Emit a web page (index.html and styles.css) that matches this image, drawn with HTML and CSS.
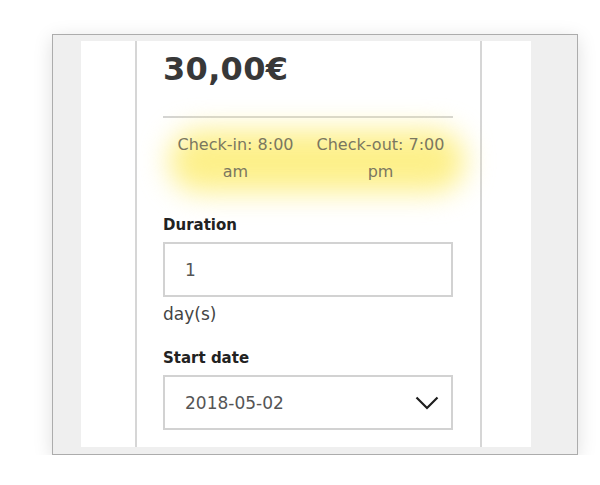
FILE: index.html
```html
<!DOCTYPE html>
<html>
<head>
<meta charset="utf-8">
<link rel="stylesheet" href="styles.css">
</head>
<body>
<div class="frame">
  <div class="page">
    <div class="gutter"></div>
    <div class="column">
      <div class="price">30,00€</div>
      <div class="rule"></div>
      <div class="hours">
        <div class="hour">Check-in: 8:00 am</div>
        <div class="hour">Check-out: 7:00 pm</div>
      </div>
      <div class="field">
        <div class="label">Duration</div>
        <div class="input">1</div>
        <div class="unit">day(s)</div>
      </div>
      <div class="field">
        <div class="label">Start date</div>
        <div class="input select">
          <span>2018-05-02</span>
          <svg class="chev" width="24" height="14" viewBox="0 0 24 14"><path d="M1.5 1.5 L12 12 L22.5 1.5" fill="none" stroke="#1e1e1e" stroke-width="2.2"/></svg>
        </div>
      </div>
    </div>
  </div>
</div>
</body>
</html>
```
FILE: styles.css
```css
html, body {
  margin: 0;
  padding: 0;
  background: #ffffff;
}
body {
  font-family: "DejaVu Sans", "Noto Sans", sans-serif;
  color: #333;
}
.frame {
  margin: 34px 0 0 52px;
  border: 1px solid #acacac;
  background: #efefef;
  box-shadow: 0 4px 18px rgba(0,0,0,0.13);
  padding: 6px 0 0 28px;
  box-sizing: content-box;
  width: 496px;
  height: 413px;
  overflow: hidden;
}
.page {
  width: 450px;
  height: 406px;
  background: #fff;
  display: flex;
  overflow: hidden;
}
.gutter {
  width: 54px;
  flex: none;
}
.column {
  width: 290px;
  flex: none;
  border-left: 2px solid #d6d6d6;
  border-right: 2px solid #d6d6d6;
  padding: 0 27px 0 26px;
}
.price {
  font-size: 32px;
  font-weight: bold;
  color: #383838;
  line-height: 40px;
  margin-top: 8px;
  letter-spacing: 0.3px;
}
.rule {
  height: 2px;
  background: #d4d4d4;
  margin-top: 27px;
}
.hours {
  position: relative;
  display: flex;
  padding: 13px 0 9px;
}
.hours::before {
  content: "";
  position: absolute;
  left: 6px;
  right: -12px;
  top: 12px;
  bottom: 2px;
  background: #fdf08a;
  border-radius: 40px;
  filter: blur(14px);
  z-index: 0;
}
.hour {
  position: relative;
  z-index: 1;
  flex: 1;
  text-align: center;
  font-size: 16px;
  line-height: 27px;
  color: #7a7760;
  padding: 0 4px;
}
.field {
  margin-top: 20px;
}
.label {
  font-size: 15px;
  font-weight: 600;
  color: #222;
  line-height: 22px;
  margin-bottom: 6px;
}
.input {
  height: 51px;
  border: 2px solid #d2d2d2;
  display: flex;
  align-items: center;
  padding: 0 12px 0 20px;
  font-size: 17px;
  color: #555;
}
.select {
  justify-content: space-between;
}
.chev {
  display: block;
}
.unit {
  font-size: 17px;
  color: #444;
  line-height: 22px;
  margin-top: 6px;
  margin-bottom: 22px;
}
```
